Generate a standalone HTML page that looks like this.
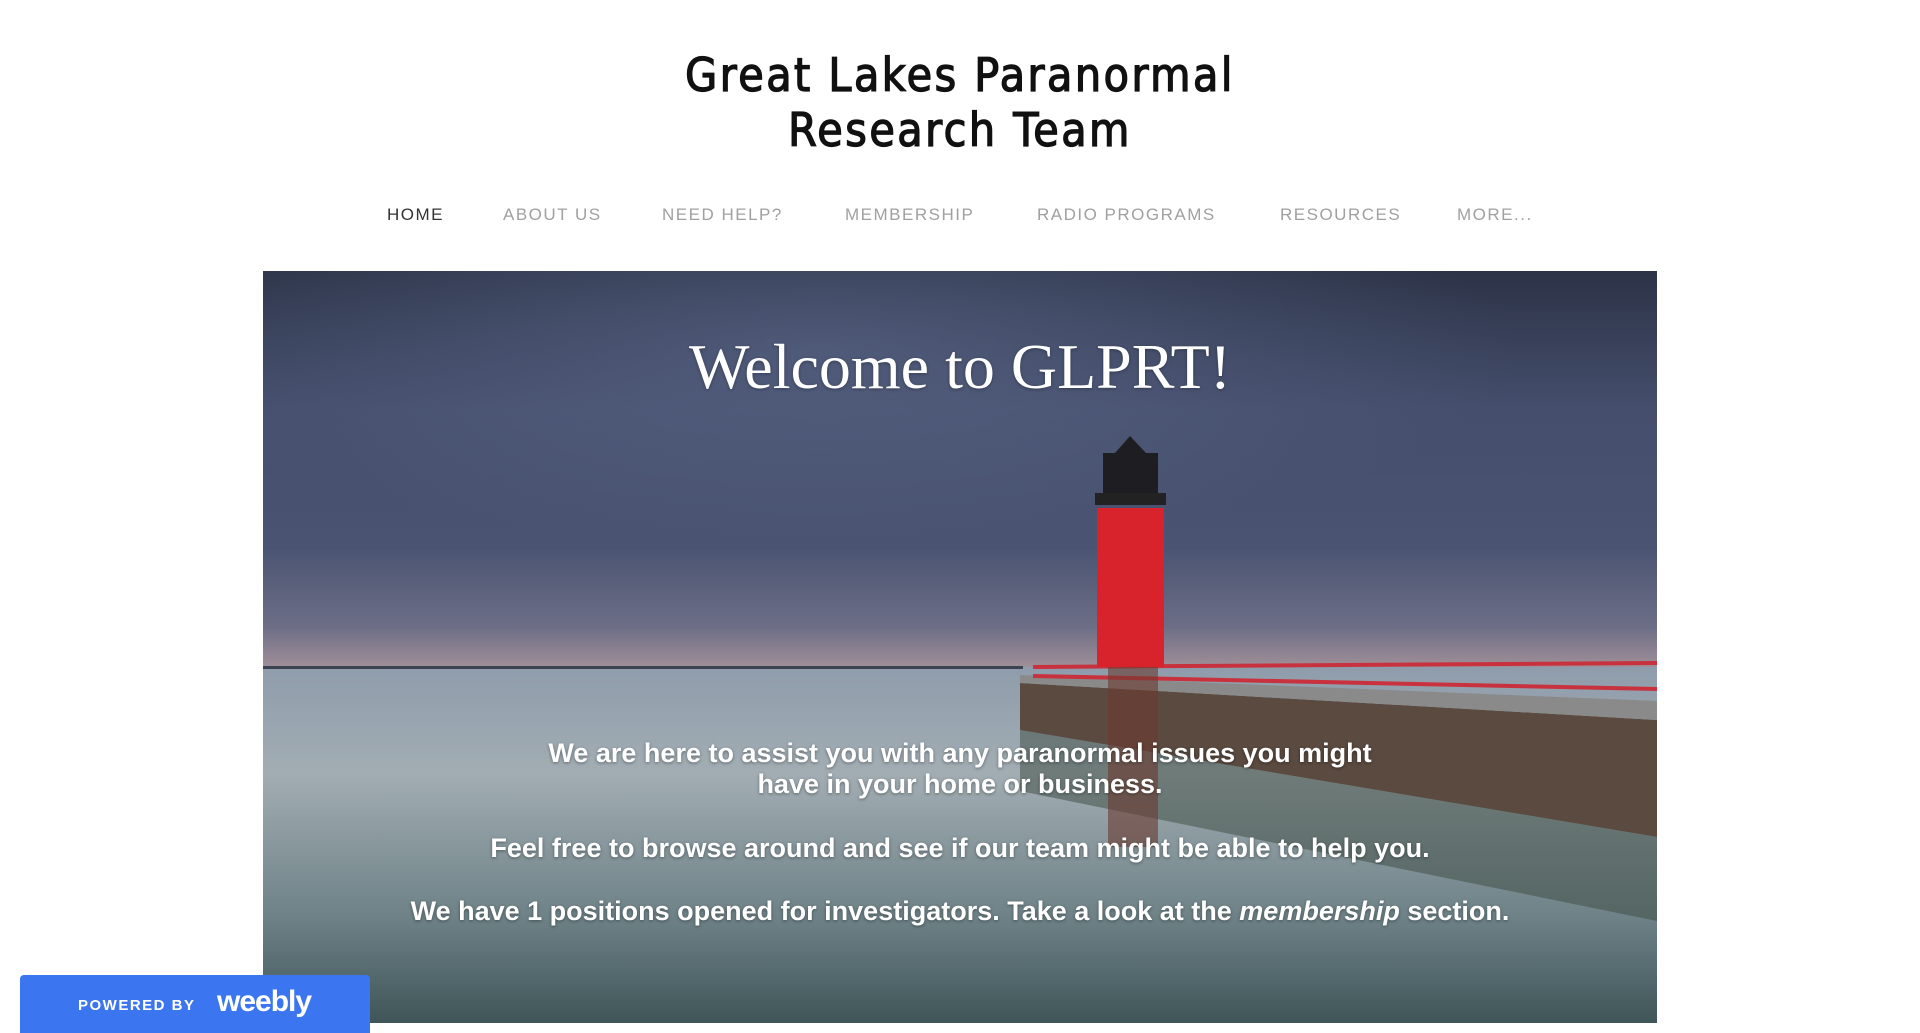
<!DOCTYPE html>
<html><head><meta charset="utf-8"><style>
body{margin:0;width:1920px;height:1033px;background:#fff;overflow:hidden;position:relative;font-family:"Liberation Sans",sans-serif}
.t{position:absolute;left:0;width:1920px;text-align:center;font-size:46px;letter-spacing:2.5px;color:#111;line-height:55px;top:48px;font-family:"DejaVu Sans Condensed","Liberation Sans",sans-serif;font-weight:normal;-webkit-text-stroke:1.3px #111}
.nav{position:absolute;top:205px;font-size:17px;letter-spacing:1.5px;color:#a0a0a0;white-space:nowrap}
.hero{position:absolute;left:263px;top:271px;width:1394px;height:752px;overflow:hidden}
.w{position:absolute;left:263px;width:1394px;text-align:center;color:#fff;font-weight:bold;font-size:27px;white-space:nowrap;text-shadow:0 1px 3px rgba(0,0,0,.4)}
.badge{position:absolute;left:20px;top:975px;width:350px;height:58px;background:#3b76f0;border-radius:4px 4px 0 0;color:#fff}
</style></head><body>
<div class="t">Great Lakes Paranormal<br>Research Team</div>
<div class="nav" style="left:387px;color:#333">HOME</div>
<div class="nav" style="left:503px">ABOUT US</div>
<div class="nav" style="left:662px">NEED HELP?</div>
<div class="nav" style="left:845px">MEMBERSHIP</div>
<div class="nav" style="left:1037px">RADIO PROGRAMS</div>
<div class="nav" style="left:1280px">RESOURCES</div>
<div class="nav" style="left:1457px">MORE...</div>
<div class="hero"><svg width="1394" height="752" viewBox="0 0 1394 752">
<defs>
<linearGradient id="sky" x1="0" y1="0" x2="0" y2="1"><stop offset="0" stop-color="#2c3347"/><stop offset=".35" stop-color="#454e6c"/><stop offset=".7" stop-color="#4a5472"/><stop offset=".9" stop-color="#6d6e86"/><stop offset="1" stop-color="#a08f98"/></linearGradient>
<linearGradient id="sea" x1="0" y1="0" x2="0" y2="1"><stop offset="0" stop-color="#8f9cab"/><stop offset=".3" stop-color="#a2adb3"/><stop offset=".7" stop-color="#6e8287"/><stop offset="1" stop-color="#3f5558"/></linearGradient>
<radialGradient id="glow" cx=".4" cy=".2" r=".5"><stop offset="0" stop-color="#5d6a8c" stop-opacity=".6"/><stop offset="1" stop-color="#5d6a8c" stop-opacity="0"/></radialGradient>
</defs>
<rect width="1394" height="396" fill="url(#sky)"/>
<rect width="1394" height="396" fill="url(#glow)"/>
<rect y="396" width="1394" height="356" fill="url(#sea)"/>
<rect x="0" y="395" width="760" height="3" fill="#3a4450"/>
<polygon points="757,459 1394,566 1394,650 757,520" fill="#3c4a40" opacity=".5"/>
<polygon points="757,412 1394,449 1394,566 757,459" fill="#5a4a40"/>
<polygon points="757,404 1394,430 1394,449 757,412" fill="#8a8a8a"/>
<g stroke="#c8323e" stroke-width="4" fill="none"><path d="M770,396 L1394,392"/><path d="M770,405 L1394,418"/></g>
<rect x="845" y="396" width="50" height="180" fill="#6a3a30" opacity=".6"/>
<rect x="834" y="237" width="67" height="159" fill="#d8232d"/>
<rect x="840" y="182" width="55" height="50" fill="#1e1e22"/>
<rect x="832" y="222" width="71" height="12" fill="#222"/>
<polygon points="852,182 883,182 867,165" fill="#1e1e22"/>
</svg></div>
<div style="position:absolute;left:263px;top:330px;width:1394px;text-align:center;color:#fff;font-family:'Liberation Serif',serif;font-size:64px;text-shadow:0 1px 3px rgba(0,0,0,.3)">Welcome to GLPRT!</div>
<div class="w" style="top:738px;line-height:31px">We are here to assist you with any paranormal issues you might<br>have in your home or business.</div>
<div class="w" style="top:833px">Feel free to browse around and see if our team might be able to help you.</div>
<div class="w" style="top:896px">We have 1 positions opened for investigators. Take a look at the <i>membership</i> section.</div>
<div class="badge"><span style="position:absolute;left:58px;top:22px;font-size:15px;font-weight:bold;letter-spacing:1.5px">POWERED BY</span><span style="position:absolute;left:197px;top:10px;font-size:30px;font-weight:bold;letter-spacing:-1px">weebly</span></div>
</body></html>
